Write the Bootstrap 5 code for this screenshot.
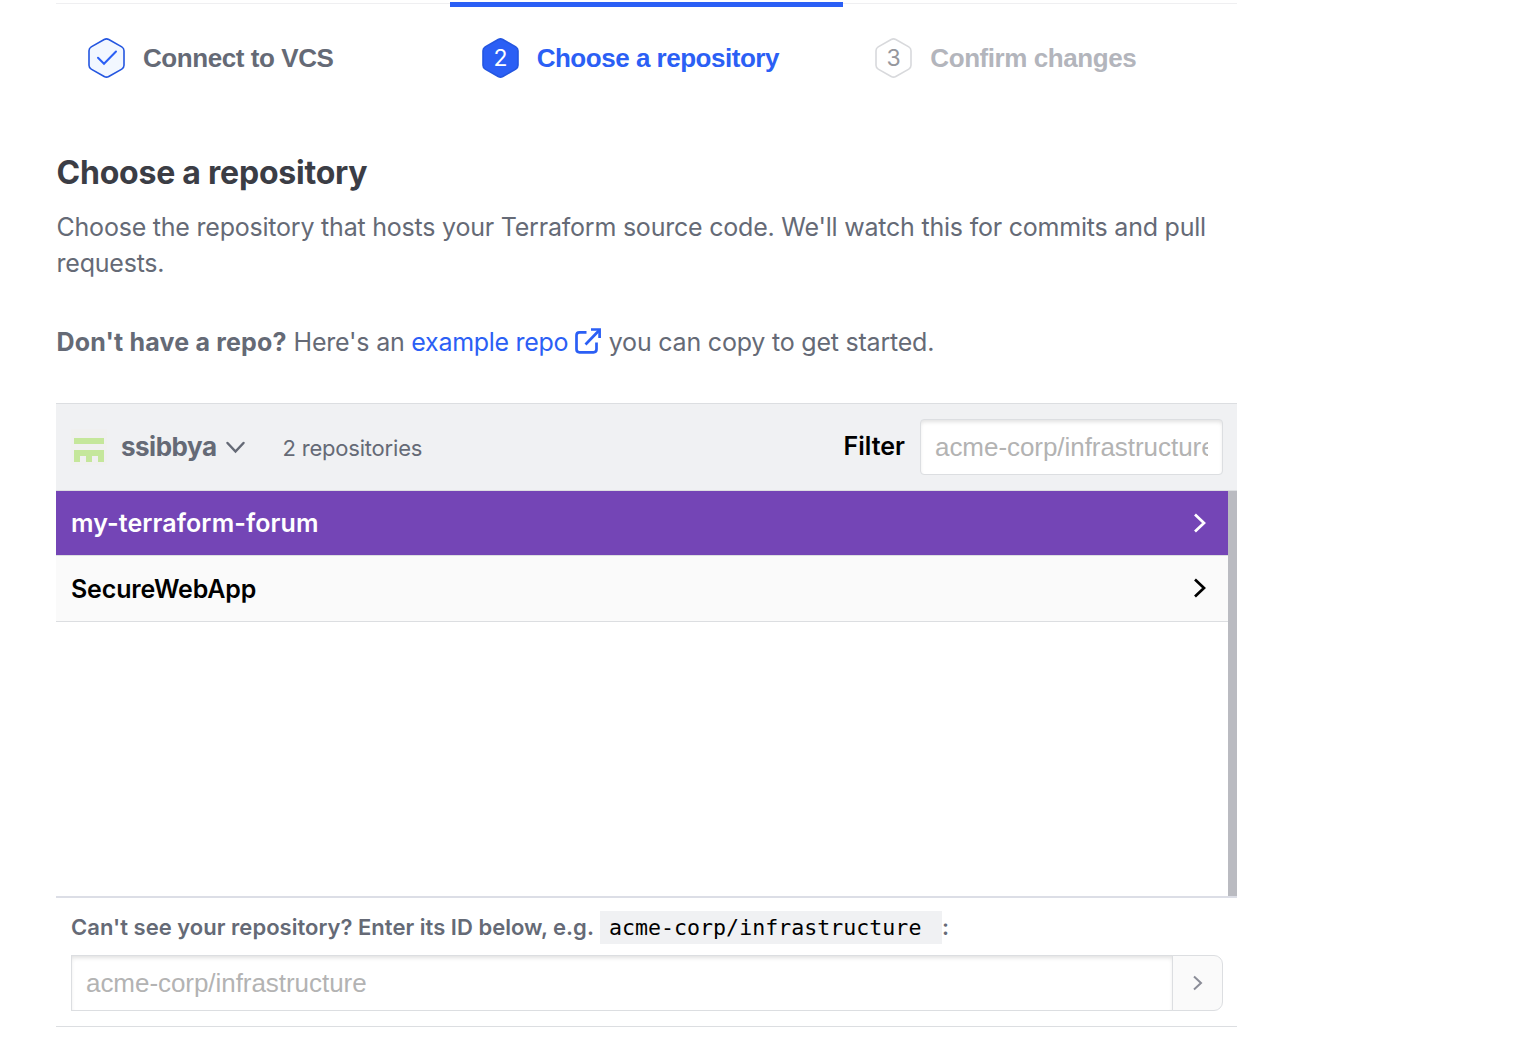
<!DOCTYPE html>
<html lang="en">
<head>
<meta charset="utf-8">
<meta name="viewport" content="width=device-width, initial-scale=1">
<title>Choose a repository</title>
<link href="https://cdn.jsdelivr.net/npm/bootstrap@5.3.0/dist/css/bootstrap.min.css" rel="stylesheet">
<style>
  body { font-family: Inter, sans-serif; color: #656a76; font-size: 25px; line-height: 36px; }
  .wizard { width: 1181px; margin-left: 56px; }
  .steps { height: 101px; padding-top: 2px; }
  .step { border-top: 1px solid #efeff1; margin-top: 1px; padding: 34px 0 0 32px; font: bold 26px/40px "Liberation Sans", Arial, sans-serif; letter-spacing: -.43px; gap: 18px; white-space: nowrap; }
  .step.current { border-top: 5px solid #2b5ff5; margin-top: 0; padding-top: 31px; color: #2b5ff5; letter-spacing: -.48px; }
  .step.upcoming { color: #b3b5bc; }
  .hexagon { width: 37px; height: 40px; flex: none; }
  .hexagon text { font: 400 23px Inter, sans-serif; letter-spacing: 0; text-anchor: middle; }
  .title { font-size: 32px; line-height: 40px; font-weight: 700; color: #3b3d45; margin: 52px 0 0; padding-left: .5px; letter-spacing: -.22px; }
  .intro { margin: 16px 0 0; padding-left: .5px; letter-spacing: -.215px; }
  .hint { margin: 43px 0 0; padding-left: .5px; letter-spacing: -.21px; }
  .hint strong { letter-spacing: .18px; }
  .hint a { color: #2b5ff5; text-decoration: none; letter-spacing: -.3px; }
  .external { width: 26px; height: 26px; margin: -7px 1px 0 0; }
  .picker { margin-top: 43px; border-top: 1px solid #dcdee1; border-bottom: 1px solid #dcdee1; }
  .picker-head { height: 87px; background: #f0f1f3; border-bottom: 1px solid #dcdee1; padding: 0 14px 0 15px; }
  .avatar { width: 36px; height: 36px; }
  .owner { font-size: 26px; font-weight: 700; margin-left: 14px; letter-spacing: -.5px; }
  .caret { margin-left: 8px; }
  .count { font-size: 22px; margin-left: 36px; letter-spacing: -.2px; padding-top: 1px; }
  .filter-label { font-weight: 600; color: #000; margin-right: 15px; padding-bottom: 2px; }
  .field.form-control { height: 56px; padding: 0 14px; border: 1px solid #dcdee1; border-radius: 4px; box-shadow: inset 0 3px 4px -1px #0000001f; font: 26px "Liberation Sans", Arial, sans-serif; letter-spacing: -.05px; }
  .field::placeholder { color: #b3b3b3; opacity: 1; }
  .field.filter-field { width: 303px; }
  .repos { height: 405px; background: #fff; border-right: 9px solid #babbc1; }
  .repo { height: 66px; border: 0; border-bottom: 1px solid #dcdee1; border-radius: 0 !important; padding: 0 21.5px 0 15px; background: #fafafa; color: #000; font-weight: 600; letter-spacing: -.15px; }
  .repo.chosen { height: 65px; background: #7445b6; color: #fff; letter-spacing: .1px; }
  .repo:not(.chosen) svg { margin-bottom: 2px; }
  .manual { border-top: 2px solid #dcdee6; height: 130px; padding: 13px 14px 0 15px; }
  .manual-label { font-size: 22px; font-weight: 600; line-height: 33px; margin-bottom: 11px; white-space: nowrap; letter-spacing: .02px; }
  .sample { font: 21.6px/33px "DejaVu Sans Mono", monospace; color: #000; background: #f0f1f3; width: 342px; padding-left: 9px; margin-left: 6px; }
  .go { width: 51px; background: #fafafa; border: 1px solid #dcdee1; border-radius: 0 9px 9px 0 !important; padding: 0 0 2px; line-height: 1; }
  .manual .field { border-radius: 0; }
</style>
</head>
<body>
<main class="wizard">
  <nav class="steps row g-0 align-items-stretch">
    <div class="step col d-flex">
      <svg class="hexagon" viewBox="0 0 37 40"><path d="M16.2 1.5q2.3-1.3 4.6 0l13 7.4q2.2 1.3 2.2 3.8v14.6q0 2.5-2.2 3.8l-13 7.4q-2.3 1.3-4.6 0l-13-7.4Q1 29.8 1 27.3V12.7q0-2.5 2.2-3.8z" fill="#f2f7ff" stroke="#2456e0" stroke-width="1.6"/><path d="M10 19.8l6 6L28 13.5" fill="none" stroke="#2b5ff5" stroke-width="2" stroke-linecap="round"/></svg>
      <span>Connect to VCS</span>
    </div>
    <div class="step current col d-flex">
      <svg class="hexagon" viewBox="0 0 37 40"><path d="M16.2 1.5q2.3-1.3 4.6 0l13 7.4q2.2 1.3 2.2 3.8v14.6q0 2.5-2.2 3.8l-13 7.4q-2.3 1.3-4.6 0l-13-7.4Q1 29.8 1 27.3V12.7q0-2.5 2.2-3.8z" fill="#2b5ff5" stroke="#2456e0" stroke-width="1.6"/><text x="18.5" y="28" fill="#fff">2</text></svg>
      <span>Choose a repository</span>
    </div>
    <div class="step upcoming col d-flex">
      <svg class="hexagon" viewBox="0 0 37 40"><path d="M16.2 1.5q2.3-1.3 4.6 0l13 7.4q2.2 1.3 2.2 3.8v14.6q0 2.5-2.2 3.8l-13 7.4q-2.3 1.3-4.6 0l-13-7.4Q1 29.8 1 27.3V12.7q0-2.5 2.2-3.8z" fill="#fff" stroke="#d8d9dc" stroke-width="1.6"/><text x="18.5" y="28" fill="#96979d">3</text></svg>
      <span>Confirm changes</span>
    </div>
  </nav>

  <h1 class="title">Choose a repository</h1>
  <p class="intro">Choose the repository that hosts your Terraform source code. We'll watch this for commits and pull<br>requests.</p>
  <p class="hint"><strong>Don't have a repo?</strong> Here's an <a href="#">example repo <svg class="external" viewBox="0 0 26 26" fill="none" stroke="#2b5ff5" stroke-width="2.7" stroke-linejoin="round"><path d="M11.500 4.300H4.500q-3 0-3 3v14q0 3 3 3h14q3 0 3-3V14.500M10.500 16.500L24 2.500"/><path d="M16 1.500h8.600V10" stroke-linejoin="miter"/></svg></a> you can copy to get started.</p>

  <section class="picker">
    <header class="picker-head d-flex align-items-center">
      <svg class="avatar" viewBox="0 0 36 36"><path d="M0 0h36v36H0z" fill="#f0f0f0"/><path d="M3 9h30v6H3zM3 21h30v12h-6v-6h-6v6h-6v-6H9v6H3z" fill="#c5e79b"/></svg>
      <span class="owner">ssibbya</span>
      <svg class="caret" width="22" height="16" viewBox="0 0 22 16" fill="none" stroke="#656a76" stroke-width="2.5" stroke-linecap="round"><path d="M3.500 4l8 8.500 8-8.500"/></svg>
      <span class="count">2 repositories</span>
      <label class="filter-label ms-auto" for="filter">Filter</label>
      <input id="filter" class="field filter-field form-control" placeholder="acme-corp/infrastructure">
    </header>
    <div class="repos list-group rounded-0">
      <a class="repo chosen list-group-item d-flex align-items-center justify-content-between" href="#">my-terraform-forum
        <svg width="14" height="20" viewBox="0 0 14 20" fill="none" stroke="currentColor" stroke-width="2.7"><path d="M2 1.5l9 8.500-9 8.500"/></svg></a>
      <a class="repo list-group-item d-flex align-items-center justify-content-between" href="#">SecureWebApp
        <svg width="14" height="20" viewBox="0 0 14 20" fill="none" stroke="currentColor" stroke-width="2.7"><path d="M2 1.5l9 8.500-9 8.500"/></svg></a>
    </div>
    <div class="manual">
      <label class="manual-label d-flex" for="repo-id"><span>Can't see your repository? Enter its ID below, e.g.</span><code class="sample">acme-corp/infrastructure</code><span>:</span></label>
      <div class="input-group">
        <input id="repo-id" class="field form-control" placeholder="acme-corp/infrastructure">
        <button class="go btn" type="button" aria-label="Next"><svg width="12" height="16" viewBox="0 0 12 16" fill="none" stroke="#8b8d98" stroke-width="2"><path d="M2 1.5l7 6.500-7 6.500"/></svg></button>
      </div>
    </div>
  </section>
</main>
<script src="https://cdn.jsdelivr.net/npm/bootstrap@5.3.0/dist/js/bootstrap.bundle.min.js"></script>
</body>
</html>
